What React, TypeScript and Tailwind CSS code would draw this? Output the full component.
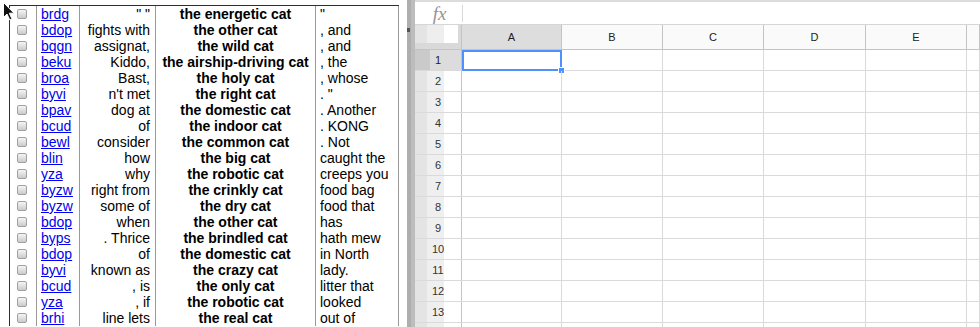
import type { ReactNode } from "react";

type Row = [string, string, string, string];

const rows: Row[] = [
  ["brdg", '" "', "the energetic cat", '"'],
  ["bdop", "fights with", "the other cat", ", and"],
  ["bqgn", "assignat,", "the wild cat", ", and"],
  ["beku", "Kiddo,", "the airship-driving cat", ", the"],
  ["broa", "Bast,", "the holy cat", ", whose"],
  ["byvi", "n't met", "the right cat", '. "'],
  ["bpav", "dog at", "the domestic cat", ". Another"],
  ["bcud", "of", "the indoor cat", ". KONG"],
  ["bewl", "consider", "the common cat", ". Not"],
  ["blin", "how", "the big cat", "caught the"],
  ["yza", "why", "the robotic cat", "creeps you"],
  ["byzw", "right from", "the crinkly cat", "food bag"],
  ["byzw", "some of", "the dry cat", "food that"],
  ["bdop", "when", "the other cat", "has"],
  ["byps", ". Thrice", "the brindled cat", "hath mew"],
  ["bdop", "of", "the domestic cat", "in North"],
  ["byvi", "known as", "the crazy cat", "lady."],
  ["bcud", ", is", "the only cat", "litter that"],
  ["yza", ", if", "the robotic cat", "looked"],
  ["brhi", "line lets", "the real cat", "out of"],
];

const columns = [
  { name: "A", width: "w-[100px]" },
  { name: "B", width: "w-[101px]" },
  { name: "C", width: "w-[101px]" },
  { name: "D", width: "w-[102px]" },
  { name: "E", width: "w-[101px]" },
  { name: "", width: "flex-1" },
];

// the 14th row only peeks in at the bottom edge, so it gets no label
const rowNumbers = Array.from({ length: 14 }, (_, i) => i + 1);

function Checkbox() {
  return (
    <span className="block h-[10px] w-[10px] rounded-[2px] border border-[#a0a0a0] bg-gradient-to-b from-[#f5f5f5] to-[#cbcbcb]" />
  );
}

function Cursor() {
  return (
    <svg
      className="absolute left-[2px] top-[1px]"
      width="13"
      height="21"
      viewBox="0 0 13 21"
    >
      <path
        d="M1.5 1.5 L1.5 16.5 L5 13 L7.8 19 L10 18 L7.3 12.2 L12 12.2 Z"
        fill="#111"
        stroke="#fff"
        strokeWidth="1"
        strokeLinejoin="round"
      />
    </svg>
  );
}

function CatTable() {
  return (
    <div className="relative w-[407px] shrink-0 pl-[9px] pt-[5px]">
      <div className="w-[390px] border-l border-t border-[#2e2e2e]">
        {rows.map(([code, before, cat, after], i) => (
          <div
            key={i}
            className="grid h-4 grid-cols-[27px_43px_76px_160px_83px] text-[14px] leading-4 text-black"
          >
            <div className="flex items-center border-r border-[#999] pl-[7px]">
              <Checkbox />
            </div>
            <div className="whitespace-nowrap border-r border-[#999] pl-1">
              <a href="#" className="text-[#0000ee] underline">
                {code}
              </a>
            </div>
            <div className="overflow-hidden whitespace-pre border-r border-[#999] pr-[5px] text-right">
              {before}
            </div>
            <div className="overflow-hidden whitespace-nowrap border-r border-[#999] text-center font-bold">
              {cat}
            </div>
            <div className="overflow-hidden whitespace-nowrap border-r border-[#999] pl-1">
              {after}
            </div>
          </div>
        ))}
      </div>
      <Cursor />
    </div>
  );
}

function HeaderCell({ children, width, active }: { children: ReactNode; width: string; active?: boolean }) {
  return (
    <div
      className={`${width} flex shrink-0 items-center justify-center border-r border-[#c4c4c4] text-[11px] text-[#222] ${
        active ? "bg-[#dddddd]" : "bg-[#fafafa]"
      }`}
    >
      {children}
    </div>
  );
}

function Sheet() {
  return (
    <div className="flex min-w-0 flex-1 flex-col overflow-hidden">
      <div className="h-[2px] shrink-0 bg-[#dcdcdc]" />

      {/* formula bar */}
      <div className="flex h-[23px] shrink-0 border-b border-[#d6d6d6]">
        <div className="flex w-[47px] items-center justify-center pt-[2px] pl-[2px] font-['Liberation_Serif',serif] text-[19px] italic text-[#949494]">
          fx
        </div>
        <div className="mt-[3px] h-[17px] w-px bg-[#d9d9d9]" />
      </div>

      {/* column headers */}
      <div className="flex h-[25px] shrink-0 border-b border-[#c4c4c4]">
        <div className="flex w-[47px] shrink-0 flex-col border-r border-[#c4c4c4] bg-[#d9d9d9]">
          <div className="h-[18px] bg-[linear-gradient(to_right,#e4e4e4_0px,#e4e4e4_12px,#eeeeee_12px,#eeeeee_29px,#ffffff_29px,#ffffff_43px,#d9d9d9_43px)]" />
        </div>
        {columns.map((col) => (
          <HeaderCell key={col.name || "rest"} width={col.width} active={col.name === "A"}>
            {col.name}
          </HeaderCell>
        ))}
      </div>

      {/* grid rows */}
      {rowNumbers.map((n) => (
        <div key={n} className="flex h-[21px] shrink-0 border-b border-[#dadada]">
          <div
            className={`flex w-[47px] shrink-0 items-center justify-center border-r border-[#c4c4c4] text-[11px] ${
              n === 1
                ? "bg-[linear-gradient(to_right,#cacaca_0px,#cacaca_15px,#dcdcdc_15px)] text-[#222]"
                : "bg-[linear-gradient(to_right,#e4e4e4_0px,#e4e4e4_12px,#efefef_12px,#efefef_29px,#ffffff_29px)] text-[#333]"
            }`}
          >
            {n < 14 ? n : null}
          </div>
          {columns.map((col, ci) => (
            <div
              key={ci}
              className={`${col.width} relative shrink-0 border-r border-[#dadada]`}
            >
              {n === 1 && ci === 0 ? (
                <>
                  <div className="absolute -bottom-px left-0 -right-px top-0 border-2 border-[#4d90fe]" />
                  <div className="absolute -bottom-[4px] -right-[4px] h-[7px] w-[7px] border border-white bg-[#4d90fe]" />
                </>
              ) : null}
            </div>
          ))}
        </div>
      ))}
    </div>
  );
}

export default function App() {
  return (
    <div className="flex h-[327px] w-[980px] overflow-hidden bg-white font-['Liberation_Sans',Arial,sans-serif]">
      <CatTable />
      <div className="flex w-[8px] shrink-0">
        <div className="w-[4px] bg-[#aeaeae]">
          <div className="mt-[28px] h-[4px] w-[3px] bg-[#555]" />
        </div>
        <div className="w-[4px] bg-[#bdbdbd]" />
      </div>
      <Sheet />
    </div>
  );
}
